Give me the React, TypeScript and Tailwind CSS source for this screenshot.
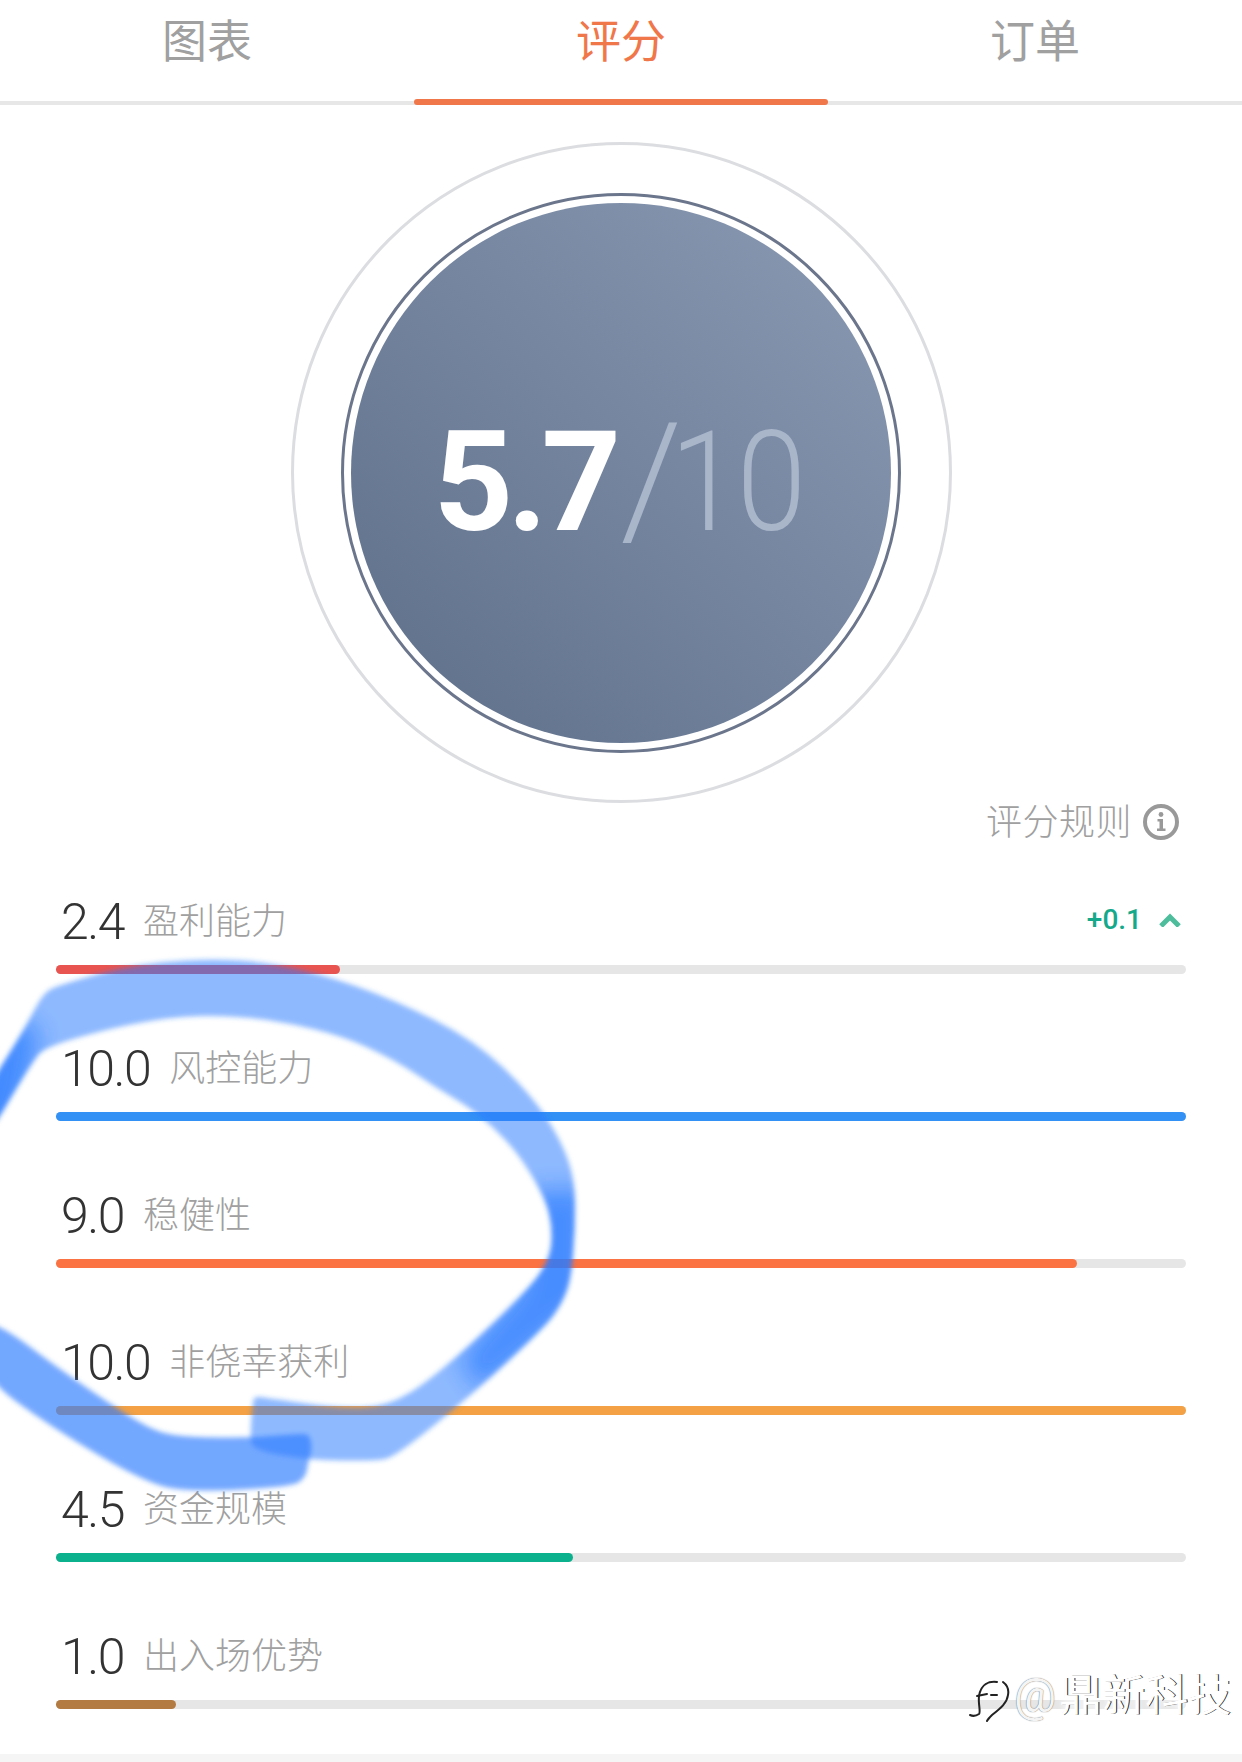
const TABS = ["图表", "评分", "订单"];

const SCORES = [
  { value: "2.4", label: "盈利能力", fill: "w-[284px]", color: "bg-[#e85450]", change: "+0.1" },
  { value: "10.0", label: "风控能力", fill: "w-full", color: "bg-[#3390f5]" },
  { value: "9.0", label: "稳健性", fill: "w-[1021px]", color: "bg-[#fb7343]" },
  { value: "10.0", label: "非侥幸获利", fill: "w-full", color: "bg-[#f3a144]" },
  { value: "4.5", label: "资金规模", fill: "w-[517px]", color: "bg-[#0bb08d]" },
  { value: "1.0", label: "出入场优势", fill: "w-[120px]", color: "bg-[#b37b41]" },
];

// freehand outline, rounded off through the midpoints
const smooth = (pts: number[][]) => {
  const mid = (a: number[], b: number[]) => `${(a[0] + b[0]) / 2} ${(a[1] + b[1]) / 2}`;
  let d = `M${mid(pts[pts.length - 1], pts[0])}`;
  pts.forEach((p, i) => {
    d += ` Q${p[0]} ${p[1]} ${mid(p, pts[(i + 1) % pts.length])}`;
  });
  return d + " Z";
};

const MAIN_STROKE = smooth([
  [-20, 1100], [24, 1030], [43, 993], [59, 985], [138, 963], [237, 958], [316, 972], [395, 1000], [474, 1040], [530, 1093],
  [561, 1140], [575, 1180], [575, 1230], [571, 1280], [561, 1305], [545, 1327], [474, 1393], [395, 1457], [375, 1461], [308, 1460],
  [253, 1450], [250, 1436], [253, 1400], [255, 1397], [261, 1397], [336, 1408], [387, 1407], [435, 1377], [518, 1300], [549, 1263],
  [553, 1230], [545, 1197], [514, 1147], [474, 1110], [435, 1087], [395, 1060], [336, 1033], [245, 1015], [158, 1017], [47, 1045],
  [32, 1062], [-20, 1150],
]);

const TAIL_STROKE = smooth([
  [-20, 1318], [12, 1333], [51, 1363], [119, 1410], [158, 1433], [190, 1437], [249, 1438], [304, 1433], [310, 1436], [312, 1450],
  [308, 1462], [306, 1477], [292, 1487], [190, 1492], [146, 1483], [51, 1427], [-20, 1375],
]);

const InkCircle = () => (
  <svg className="absolute top-0 left-0 pointer-events-none" width="1242" height="1762" viewBox="0 0 1242 1762">
    <defs>
      <filter id="soft" x="-5%" y="-5%" width="110%" height="110%">
        <feGaussianBlur stdDeviation="2.5" />
      </filter>
      <filter id="wide" x="-30%" y="-30%" width="160%" height="160%">
        <feGaussianBlur stdDeviation="12" />
      </filter>
      <clipPath id="mainClip">
        <path d={MAIN_STROKE} />
      </clipPath>
    </defs>
    <g filter="url(#soft)">
      <path fill="#2a7bff" fillOpacity="0.53" d={MAIN_STROKE} />
      <path fill="#2a7bff" fillOpacity="0.66" d={TAIL_STROKE} />
      <g clipPath="url(#mainClip)">
        <path fill="#2a7bff" fillOpacity="0.75" filter="url(#wide)" d="M-30 1080 L15 1020 L40 1030 L10 1160 L-30 1160 Z" />
        <path fill="#2a7bff" fillOpacity="0.7" filter="url(#wide)" d="M530 1190 L590 1190 L590 1300 L480 1390 L460 1360 L520 1290 Z" />
      </g>
    </g>
  </svg>
);

const Watermark = () => (
  <div className="absolute top-[1670px] left-[968px] flex items-center text-white text-[43px] leading-[50px] [text-shadow:1px_0_0_#222,0_0_6px_#fff]">
    <svg width="44" height="52" viewBox="0 0 44 52" fill="none" stroke="#222" strokeWidth="2" strokeLinecap="round">
      <path d="M29 12 C21 11 13 14 11 26 C10 34 13 42 11 44 C8 46 4 46 2 45" />
      <path d="M9 26 L19 24" />
      <path d="M23 25 L29 25" />
      <path d="M35 12 C39 15 41 20 40 25 C39 33 33 38 24 45 C22 47 20 49 19 51" />
    </svg>
    <span className="ml-[2px] text-[47px] text-[#f4f4f4] [text-shadow:0_0_1px_#444]">@</span>
    <span className="ml-[3px]">鼎新科技</span>
  </div>
);

const ScoreRow = ({ item }: { item: (typeof SCORES)[number] }) => (
  <div>
    <div className="flex items-center h-[50px] pl-[5px]">
      <span className="text-[50px] leading-[50px] font-light tracking-[-1.5px] text-[#333]">{item.value}</span>
      <span className="ml-[19px] text-[36px] leading-[50px] text-[#a0a0a0] font-light">{item.label}</span>
      {item.change && (
        <div className="ml-auto flex items-center text-[#14a98a] -translate-y-[2px]">
          <span className="text-[28px] font-medium">{item.change}</span>
          <svg className="ml-[17px] mr-[5px]" width="22" height="14" viewBox="0 0 22 14" fill="none" stroke="#4dbd9b" strokeWidth="5">
            <path d="M2 13 L11 4 L20 13" />
          </svg>
        </div>
      )}
    </div>
    <div className="mt-[18px] h-[9px] rounded-full bg-[#e6e6e6]">
      <div className={`h-full rounded-full ${item.fill} ${item.color}`} />
    </div>
  </div>
);

const App = () => {
  return (
    <div className="relative h-[1762px] w-[1242px] flex flex-col overflow-hidden bg-white font-[Roboto,'Noto_Sans_CJK_SC',sans-serif]">
      <div className="grid grid-cols-3 h-[105px] border-b-4 border-[#e7e7e7]">
        {TABS.map((tab, i) => (
          <div key={tab} className="relative flex justify-center pt-[16px]">
            <span className={`text-[45px] leading-[54px] ${i === 1 ? "text-[#f0774a]" : "text-[#a0a0a0]"}`}>{tab}</span>
            {i === 1 && <div className="absolute left-0 right-0 -bottom-[4px] h-[6px] rounded-full bg-[#f0774a]" />}
          </div>
        ))}
      </div>

      <div className="mt-[37px] flex justify-center">
        <div className="flex items-center justify-center w-[661px] h-[661px] rounded-full border-[3px] border-[#dcdde0]">
          <div className="flex items-center justify-center w-[560px] h-[560px] rounded-full border-[3px] border-[#6b768c]">
            <div className="flex items-center justify-center pt-[20px] pl-[10px] w-[540px] h-[540px] rounded-full bg-linear-to-tr from-[#5d6e89] to-[#8c9bb4]">
              <span className="text-[139px] leading-none font-bold text-white tracking-[-6px]">5.7</span>
              <span className="ml-[5px] text-[156px] leading-none font-light text-[#a9b6ca] translate-y-[-3px] tracking-[-12px]">/</span>
              <span className="text-[139px] leading-none font-light text-[#a9b6ca] tracking-[-3px] scale-x-[0.9] origin-left">10</span>
            </div>
          </div>
        </div>
      </div>

      <div className="flex justify-end items-center h-[37px] pr-[63px]">
        <span className="text-[36px] leading-[37px] text-[#a0a0a0] font-light translate-y-[2px] tracking-[0.5px]">评分规则</span>
        <svg className="ml-[11px]" width="36" height="36" viewBox="0 0 36 36" fill="none">
          <circle cx="18" cy="18" r="16" stroke="#999" strokeWidth="4" />
          <circle cx="18" cy="10.5" r="2.4" fill="#999" />
          <path d="M14.5 15 H20 V24.5 H22.5 V27 H14 V24.5 H16.5 V17.5 H14.5 Z" fill="#999" />
        </svg>
      </div>

      <div className="flex flex-col gap-[70px] pt-[57px] px-[56px]">
        {SCORES.map((item) => (
          <ScoreRow key={item.label} item={item} />
        ))}
      </div>

      <div className="mt-auto h-[8px] bg-[#f5f5f5]" />

      <InkCircle />
      <Watermark />
    </div>
  );
};

export default App;
